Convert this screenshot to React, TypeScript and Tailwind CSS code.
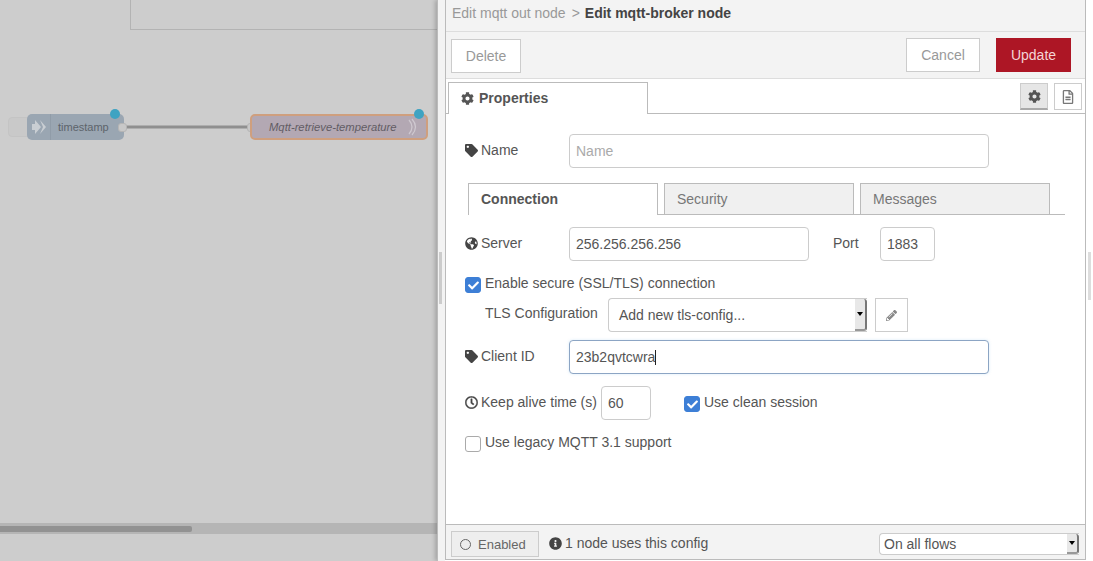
import { FaCog, FaTag, FaGlobeAmericas, FaRegClock, FaInfoCircle, FaPencilAlt, FaRegFileAlt, FaCheck } from 'react-icons/fa';
import { ReactNode } from 'react';

function Check({ on = false }: { on?: boolean }) {
  return (
    <span
      className={`flex h-4 w-4 shrink-0 items-center justify-center rounded-[3px] border ${
        on ? 'border-[#3d7fd6] bg-[#3d7fd6]' : 'border-[#aaa] bg-white'
      }`}
    >
      {on && <FaCheck className="text-[11px] text-white" />}
    </span>
  );
}

function Label({ icon, children }: { icon: ReactNode; children: ReactNode }) {
  return (
    <span className="flex items-center text-[#555]">
      <span className="flex w-[16px] shrink-0 items-center text-[13px] text-[#444]">{icon}</span>
      {children}
    </span>
  );
}

function SelectArrow() {
  return (
    <span className="flex h-full w-[12px] items-center justify-center rounded-r-[3px] border-r-2 border-b-2 border-r-[#777] border-b-[#999] bg-[#e8e8e8]">
      <span className="h-0 w-0 border-x-[3.5px] border-t-[4px] border-x-transparent border-t-black" />
    </span>
  );
}

const inputClass = 'h-[34px] rounded-[4px] border bg-white px-[6px] text-[14px] text-[#555] flex items-center';

export default function App() {
  return (
    <div className="flex h-[561px] w-[1093px] overflow-hidden bg-[#ccc] text-[14px] font-['Liberation_Sans',Arial,sans-serif]">
      {/* workspace */}
      <div className="relative h-full w-[437px] shrink-0 bg-[#cdcdcd]">
        <div className="absolute left-[130px] top-[-1px] h-[31px] w-[307px] border-b border-l border-[#b3b3b3]" />
        <svg className="absolute left-0 top-[100px]" width="437" height="50">
          <path d="M122 27 H250" stroke="#8f8f8f" strokeWidth="3" fill="none" />
        </svg>
        <div className="absolute left-[8px] top-[117px] h-[20px] w-[22px] rounded-[4px] border border-[#c4c4c4] bg-[#c9c9c9]" />
        <div className="absolute left-[27px] top-[114px] flex h-[26px] w-[97px] items-center rounded-[5px] bg-[#9aa6b2] text-[11px] text-[#5d646b]">
          <span className="flex h-full w-[24px] items-center justify-center border-r border-[#909ca8] text-[#c9ced3]">
            <svg width="14" height="16" viewBox="0 0 14 16"><path d="M3 1 L9 8 L3 15 V11 H0 V5 H3 Z M8 1 L14 8 L8 15 L11 8 Z" fill="currentColor" /></svg>
          </span>
          <span className="ml-[7px]">timestamp</span>
        </div>
        <span className="absolute left-[118px] top-[123px] h-[9px] w-[9px] rounded-[3px] border border-[#b5b5b5] bg-[#c8c8c8]" />
        <span className="absolute left-[247px] top-[123px] h-[9px] w-[9px] rounded-[3px] border border-[#b5b5b5] bg-[#c8c8c8]" />
        <span className="absolute left-[110px] top-[109px] h-[10px] w-[10px] rounded-full bg-[#3ea3c2]" />
        <div className="absolute left-[250px] top-[114px] flex h-[26px] w-[178px] items-center rounded-[5px] border-2 border-[#cf9f7e] bg-[#b3a8b3] text-[11.25px] italic text-[#625c64]">
          <span className="ml-[17px]">Mqtt-retrieve-temperature</span>
          <svg className="absolute right-[6px] top-[2px]" width="14" height="18" viewBox="0 0 14 18" fill="none" stroke="#cfc9d0" strokeWidth="1.2">
            <path d="M3 2 Q9 9 3 16 M6 1 Q13 9 6 17" />
          </svg>
        </div>
        <span className="absolute left-[414px] top-[109px] h-[10px] w-[10px] rounded-full bg-[#3ea3c2]" />
        <div className="absolute bottom-[27px] left-0 h-[11px] w-full bg-[#b5b5b5]">
          <div className="mt-[3px] h-[6px] w-[192px] rounded-r-[2px] bg-[#929292]" />
        </div>
      </div>

      {/* tray */}
      <div className="relative flex h-full flex-1 bg-white shadow-[-2px_0_4px_rgba(0,0,0,0.2)]">
        <div className="relative w-[8px] shrink-0 border-l border-[#bbb] bg-[#f3f3f3]">
          <span className="absolute left-[1px] top-[252px] h-[52px] w-[3px] bg-[#ccc]" />
        </div>
        <div className="flex h-[560px] w-[641px] shrink-0 flex-col border-x border-b border-[#bbb] bg-white">
          <div className="flex h-[32px] shrink-0 items-center border-b border-[#ddd] bg-[#f3f3f3] pb-[5px] pl-[6px] text-[#999]">
            Edit mqtt out node<span className="ml-[6px] mr-[5px]">&gt;</span>
            <b className="text-[#444]">Edit mqtt-broker node</b>
          </div>
          <div className="flex h-[47px] shrink-0 items-start justify-between border-b border-[#ddd] bg-[#f3f3f3] pl-[5px] pr-[14px] pt-[6px]">
            <button className="mt-[1px] h-[34px] w-[70px] border border-[#ccc] bg-white text-[#999]">Delete</button>
            <div className="flex gap-[16px]">
              <button className="h-[34px] w-[74px] border border-[#ccc] bg-white text-[#999]">Cancel</button>
              <button className="h-[34px] w-[75px] bg-[#ad1625] text-[#f4d4d6]">Update</button>
            </div>
          </div>

          <div className="flex h-[35px] shrink-0 items-end justify-between border-b border-[#bbb] pl-[2px] pr-[3px]">
            <div className="mb-[-1px] flex h-[32px] w-[200px] items-center border border-b-0 border-[#bbb] bg-white pl-[12px] font-bold text-[#555]">
              <FaCog className="mr-[5px] text-[13px]" />
              Properties
            </div>
            <div className="mb-[3px] flex gap-[6px]">
              <span className="flex h-[27px] w-[28px] items-center justify-center border border-[#ccc] border-b-2 border-b-[#aaa] bg-[#e6e6e6] text-[#555]">
                <FaCog className="text-[13px]" />
              </span>
              <span className="flex h-[27px] w-[28px] items-center justify-center border border-[#ccc] bg-white text-[#777]">
                <FaRegFileAlt className="text-[14px]" />
              </span>
            </div>
          </div>

          <div className="flex flex-1 flex-col pl-[19px]">
            <div className="mt-[20px] flex h-[34px] items-center">
              <span className="w-[104px] pb-[1px]"><Label icon={<FaTag />}>Name</Label></span>
              <div className={`${inputClass} w-[420px] border-[#ccc] text-[#aaa]`}>Name</div>
            </div>

            <div className="ml-[3px] mt-[15px] flex h-[32px] w-[597px] items-end gap-[6px] border-b border-[#bbb]">
              <div className="mb-[-1px] flex h-[32px] w-[190px] items-center border border-b-0 border-[#bbb] bg-white pl-[12px] font-bold text-[#555]">Connection</div>
              <div className="flex h-[31px] w-[190px] items-center border border-b-0 border-[#bbb] bg-[#f0f0f0] pl-[12px] text-[#777]">Security</div>
              <div className="flex h-[31px] w-[190px] items-center border border-b-0 border-[#bbb] bg-[#f0f0f0] pl-[12px] text-[#777]">Messages</div>
            </div>

            <div className="mt-[12px] flex h-[34px] items-center">
              <span className="w-[104px] pb-[1px]"><Label icon={<FaGlobeAmericas />}>Server</Label></span>
              <div className={`${inputClass} w-[240px] border-[#ccc]`}>256.256.256.256</div>
              <span className="ml-[24px] w-[47px] pb-[1px] text-[#555]">Port</span>
              <div className={`${inputClass} w-[55px] border-[#ccc]`}>1883</div>
            </div>

            <div className="mt-[13px] flex h-[20px] items-start">
              <span className="mt-[3px]"><Check on /></span>
              <span className="ml-[4px] mt-[-1px] text-[#555]">Enable secure (SSL/TLS) connection</span>
            </div>

            <div className="mt-[4px] flex h-[34px] items-center pl-[20px]">
              <span className="w-[123px] pb-[3px] text-[#555]">TLS Configuration</span>
              <div className="flex h-[34px] w-[259px] items-center justify-between rounded-l-[4px] border border-r-0 border-[#ccc] bg-white pl-[10px] text-[#555]">
                <span className="mt-[1px]">Add new tls-config...</span>
                <SelectArrow />
              </div>
              <button className="ml-[8px] flex h-[34px] w-[33px] items-center justify-center border border-[#ccc] bg-white text-[#888]">
                <FaPencilAlt className="text-[11px]" />
              </button>
            </div>

            <div className="mt-[8px] flex h-[34px] items-center">
              <span className="w-[104px] pb-[1px]"><Label icon={<FaTag />}>Client ID</Label></span>
              <div className={`${inputClass} w-[420px] border-[#8ca5c4] shadow-[0_0_3px_rgba(102,175,233,0.25)]`}>
                23b2qvtcwra<span className="h-[15px] w-px bg-[#222]" />
              </div>
            </div>

            <div className="mt-[12px] flex h-[34px] items-center">
              <span className="w-[136px] pb-[1px]"><Label icon={<FaRegClock className="stroke-[14px]" />}>Keep alive time (s)</Label></span>
              <div className={`${inputClass} w-[50px] border-[#ccc]`}>60</div>
              <span className="ml-[33px] mt-[2px]"><Check on /></span>
              <span className="ml-[4px] pb-[1px] text-[#555]">Use clean session</span>
            </div>

            <div className="mt-[12px] flex h-[20px] items-start">
              <span className="mt-[4px]"><Check /></span>
              <span className="ml-[4px] text-[#555]">Use legacy MQTT 3.1 support</span>
            </div>
          </div>

          <div className="flex h-[35px] shrink-0 items-start justify-between border-t border-[#bbb] bg-[#f3f3f3] pl-[5px] pr-[7px]">
            <div className="flex items-start">
              <span className="mt-[6px] flex h-[26px] w-[88px] items-center border border-[#ccc] bg-[#eee] pl-[8px] text-[13px] text-[#666]">
                <span className="mr-[7px] h-[11px] w-[11px] rounded-full border border-[#666]" />
                <span className="mt-[1px]">Enabled</span>
              </span>
              <span className="ml-[10px] mt-[8px] flex items-center text-[#555]">
                <FaInfoCircle className="mr-[3px] text-[13px] text-[#444]" />
                1 node uses this config
              </span>
            </div>
            <div className="mr-[-1px] mt-[8px] flex h-[22px] w-[200px] items-center justify-between rounded-l-[4px] border border-r-0 border-[#ccc] bg-white pl-[4px] text-[#555]">
              On all flows
              <SelectArrow />
            </div>
          </div>
        </div>
        <div className="relative flex-1 bg-white">
          <span className="absolute right-[2px] top-[252px] h-[48px] w-[3px] bg-[#ddd]" />
        </div>
      </div>
    </div>
  );
}
